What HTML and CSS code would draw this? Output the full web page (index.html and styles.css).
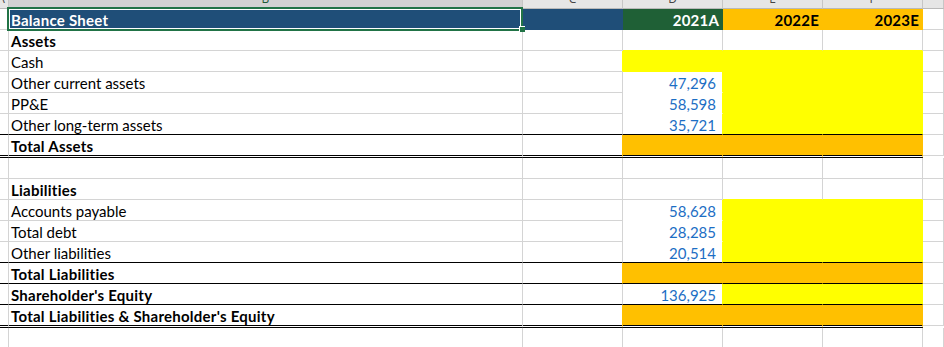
FILE: index.html
```html
<!DOCTYPE html>
<html lang="en">
<head>
<meta charset="utf-8">
<title>Balance Sheet</title>
<link rel="stylesheet" href="styles.css">
</head>
<body>
<div class="sheet">
  <div class="row">
    <div class="h ha"><span>A</span></div>
    <div class="h hb"><span>B</span></div>
    <div class="h"><span>C</span></div>
    <div class="h"><span>D</span></div>
    <div class="h"><span>E</span></div>
    <div class="h"><span>F</span></div>
    <div class="h"></div>
  </div>

  <div class="row">
    <div class="c"></div>
    <div class="c lbl blue sel-cell">Balance Sheet<div class="sel"></div><div class="handle"></div></div>
    <div class="c blue"></div>
    <div class="c yr green">2021A</div>
    <div class="c yr o">2022E</div>
    <div class="c yr o">2023E</div>
    <div class="c"></div>
  </div>

  <div class="row">
    <div class="c"></div>
    <div class="c lbl b">Assets</div>
    <div class="c"></div>
    <div class="c by"></div>
    <div class="c by"></div>
    <div class="c by"></div>
    <div class="c"></div>
  </div>

  <div class="row">
    <div class="c"></div>
    <div class="c lbl">Cash</div>
    <div class="c ry"></div>
    <div class="c y"></div>
    <div class="c y"></div>
    <div class="c y"></div>
    <div class="c"></div>
  </div>

  <div class="row">
    <div class="c"></div>
    <div class="c lbl">Other current assets</div>
    <div class="c"></div>
    <div class="c num w">47,296</div>
    <div class="c y"></div>
    <div class="c y"></div>
    <div class="c"></div>
  </div>

  <div class="row">
    <div class="c"></div>
    <div class="c lbl">PP&amp;E</div>
    <div class="c"></div>
    <div class="c num w">58,598</div>
    <div class="c y"></div>
    <div class="c y"></div>
    <div class="c"></div>
  </div>

  <div class="row bb">
    <div class="c"></div>
    <div class="c lbl">Other long-term assets</div>
    <div class="c"></div>
    <div class="c num w">35,721</div>
    <div class="c y"></div>
    <div class="c y"></div>
    <div class="c"></div>
  </div>

  <div class="row db">
    <div class="c"></div>
    <div class="c lbl b">Total Assets</div>
    <div class="c ro"></div>
    <div class="c o"></div>
    <div class="c o"></div>
    <div class="c o"></div>
    <div class="c"></div>
  </div>

  <div class="row">
    <div class="c"></div>
    <div class="c lbl"></div>
    <div class="c"></div>
    <div class="c"></div>
    <div class="c"></div>
    <div class="c"></div>
    <div class="c"></div>
  </div>

  <div class="row">
    <div class="c"></div>
    <div class="c lbl b">Liabilities</div>
    <div class="c"></div>
    <div class="c"></div>
    <div class="c by"></div>
    <div class="c by"></div>
    <div class="c"></div>
  </div>

  <div class="row">
    <div class="c"></div>
    <div class="c lbl">Accounts payable</div>
    <div class="c"></div>
    <div class="c num w">58,628</div>
    <div class="c y"></div>
    <div class="c y"></div>
    <div class="c"></div>
  </div>

  <div class="row">
    <div class="c"></div>
    <div class="c lbl">Total debt</div>
    <div class="c"></div>
    <div class="c num w">28,285</div>
    <div class="c y"></div>
    <div class="c y"></div>
    <div class="c"></div>
  </div>

  <div class="row bb">
    <div class="c"></div>
    <div class="c lbl">Other liabilities</div>
    <div class="c"></div>
    <div class="c num w">20,514</div>
    <div class="c y"></div>
    <div class="c y"></div>
    <div class="c"></div>
  </div>

  <div class="row bb">
    <div class="c"></div>
    <div class="c lbl b">Total Liabilities</div>
    <div class="c ro"></div>
    <div class="c o"></div>
    <div class="c o"></div>
    <div class="c o"></div>
    <div class="c"></div>
  </div>

  <div class="row bb">
    <div class="c"></div>
    <div class="c lbl b">Shareholder's Equity</div>
    <div class="c"></div>
    <div class="c num w">136,925</div>
    <div class="c y"></div>
    <div class="c y"></div>
    <div class="c"></div>
  </div>

  <div class="row db">
    <div class="c"></div>
    <div class="c lbl b">Total Liabilities &amp; Shareholder's Equity</div>
    <div class="c ro"></div>
    <div class="c o"></div>
    <div class="c o"></div>
    <div class="c o"></div>
    <div class="c"></div>
  </div>

  <div class="row">
    <div class="c"></div>
    <div class="c lbl"></div>
    <div class="c"></div>
    <div class="c"></div>
    <div class="c"></div>
    <div class="c"></div>
    <div class="c"></div>
  </div>
</div>
</body>
</html>
```

FILE: styles.css
```css
* { box-sizing: border-box; }

html, body {
  margin: 0;
  padding: 0;
  background: #ffffff;
}

body {
  width: 944px;
  height: 347px;
  overflow: hidden;
}

.sheet {
  display: grid;
  grid-template-columns: 9px 514px 100px 100px 100px 100px 21px;
  font-family: Lato, "Liberation Sans", sans-serif;
  font-size: 15px;
  color: #000;
}

.row { display: contents; }

/* column header strip (cut off at top) */
.h {
  height: 9px;
  background: #e6e6e6;
  border-right: 1px solid #c6c6c6;
  border-bottom: 1px solid #b9b9b9;
  overflow: hidden;
  font-family: "Open Sans", sans-serif;
  font-size: 12px;
  color: #444;
  text-align: center;
}
.h span {
  display: block;
  line-height: 12px;
  margin-top: -7px;
}
.ha span { margin-left: -6px; }
.hb { background: #d2d2d2; }
.hb span { color: #1e5a37; }

/* cells */
.c {
  height: 21px;
  border-right: 1px solid #d4d4d4;
  border-bottom: 1px solid #d4d4d4;
  display: flex;
  align-items: flex-end;
  line-height: 18px;
  white-space: nowrap;
}

.lbl { padding-left: 2px; }
.b {
  font-weight: 700;
  letter-spacing: 0.25px;
}

.num {
  justify-content: flex-end;
  padding-right: 6px;
  color: #1c6ec4;
}

.yr {
  justify-content: flex-end;
  padding-right: 3px;
  font-weight: 700;
  letter-spacing: 0.2px;
}

.blue {
  background: #1f4e78;
  border-right-color: #1f4e78;
  border-bottom-color: #1f4e78;
  color: #fff;
  font-weight: 700;
  letter-spacing: 0.25px;
}
.green {
  background: #1f6036;
  border-right-color: #1f6036;
  border-bottom-color: #1f6036;
  color: #fff;
}

.y {
  background: #ffff00;
  border-right-color: #ffff00;
  border-bottom-color: #ffff00;
}
.o {
  background: #ffc000;
  border-right-color: #ffc000;
  border-bottom-color: #ffc000;
}
.w {
  background: #fff;
  border-right-color: #ffff00;
  border-bottom-color: #fff;
}
.ry { border-right-color: #ffff00; }
.ro { border-right-color: #ffc000; }
.by { border-bottom-color: #ffff00; }

/* black borders */
.bb > .c:not(:last-child) {
  border-bottom: 1px solid #000;
}
.db > .c:not(:last-child) {
  height: 23px;
  border-bottom: 3px double #000;
  background-clip: padding-box;
}

/* active cell selection */
.sel-cell { position: relative; }
.sel {
  position: absolute;
  left: -2px;
  top: -2px;
  width: 516px;
  height: 24px;
  border: 2px solid #217346;
  box-shadow: inset 0 0 0 1px #fff;
}
.handle {
  position: absolute;
  left: 510px;
  top: 17px;
  width: 6px;
  height: 6px;
  background: #217346;
  border-left: 1px solid #fff;
  border-top: 1px solid #fff;
}
```
